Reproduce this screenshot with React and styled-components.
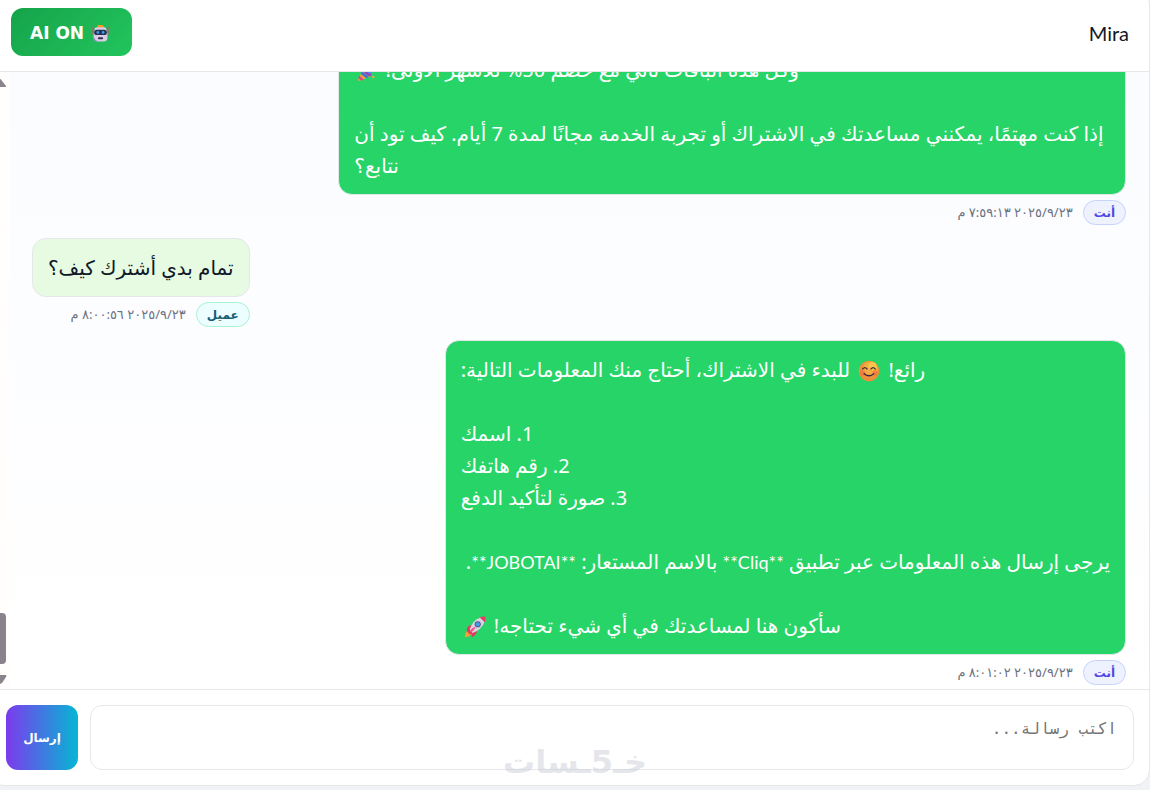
import styled, { createGlobalStyle } from 'styled-components'

const GlobalStyle = createGlobalStyle`
    *, *::before, *::after {
        box-sizing: border-box;
    }

    body {
        margin: 0;
        background-color: #f1f2f6;
        color: #111827;
        font-family: 'Noto Sans', 'DejaVu Sans', sans-serif;
    }
`

const Page = styled.div`
    position: relative;
    height: 100vh;
    padding-bottom: 4px;
    overflow: hidden;
`

const ChatCard = styled.main`
    display: flex;
    flex-direction: column;
    height: calc(100% + 12px);
    margin: -12px 0 0 -13px;
    padding: 12px 0 0 12px;
    background-color: #fff;
    border: 1px solid #e5e7eb;
    border-radius: 16px;
    overflow: hidden;
`

const Header = styled.header`
    display: flex;
    justify-content: space-between;
    align-items: center;
    padding: 7px 20px 15px 11px;
    border-bottom: 1px solid #e5e7eb;
`

const AiButton = styled.button`
    display: flex;
    align-items: center;
    gap: 8px;
    height: 48px;
    padding: 2px 23px 0 19px;
    border: none;
    border-radius: 12px;
    background-image: linear-gradient(135deg, #16a34a, #22c55e);
    color: #fff;
    font-family: 'DejaVu Sans', sans-serif;
    font-size: 17px;
    font-weight: 700;
    cursor: pointer;
`

const ContactName = styled.h1`
    margin: 0;
    padding-top: 2px;
    font-family: Lato, sans-serif;
    font-size: 20px;
    font-weight: 400;
    line-height: 28px;
`

const Body = styled.section`
    display: flex;
    flex: 1;
    min-height: 0;
    background-image: linear-gradient(#fbfcff, #fff);
`

const ScrollTrack = styled.div`
    display: flex;
    flex-direction: column;
    width: 10px;
    padding: 6px 4px 5px 0;
    background-color: #fffefc;
`

const ScrollThumb = styled.div`
    height: 51px;
    margin: auto 0 11px;
    border-radius: 0 4px 4px 0;
    background-color: #8b838b;
`

const Messages = styled.div`
    display: flex;
    flex: 1;
    flex-direction: column;
    justify-content: flex-end;
    gap: 13px;
    min-width: 0;
    padding: 0 23px 4px 22px;
    overflow: hidden;
`

const Message = styled.article`
    display: flex;
    flex-direction: column;
    flex-shrink: 0;
    gap: 5px;
    max-width: 72%;
    align-self: ${({ $own }) => ($own ? 'flex-start' : 'flex-end')};
`

const Bubble = styled.p`
    margin: 0;
    padding: 13px 15px 12px;
    border: 1px solid #e5e7eb;
    border-radius: 14px;
    background-color: ${({ $own }) => ($own ? '#27d467' : '#e7fbe3')};
    color: ${({ $own }) => ($own ? '#fff' : '#111827')};
    font-size: 20px;
    line-height: 32px;
    text-align: left;
    white-space: pre-wrap;
`

const Latin = styled.span`
    font-family: Lato, sans-serif;
    font-size: 18px;
`

const Meta = styled.footer`
    display: flex;
    align-items: center;
    gap: 10px;
    color: #6b7280;
    font-size: 13px;
    line-height: 17px;
`

const Badge = styled.span`
    padding: 3px 10px;
    border: 1px solid ${({ $own }) => ($own ? '#c7d2fe' : '#a7f3d0')};
    border-radius: 13px;
    background-color: ${({ $own }) => ($own ? '#eef2ff' : '#ecfeff')};
    color: ${({ $own }) => ($own ? '#4f46e5' : '#155e75')};
    font-size: 12px;
    font-weight: 700;
`

const Composer = styled.form`
    display: flex;
    align-items: stretch;
    gap: 12px;
    padding: 15px 15px 15px 6px;
    border-top: 1px solid #e5e7eb;
`

const MessageInput = styled.textarea`
    flex: 1;
    height: 65px;
    padding: 13px 16px;
    border: 1px solid #e5e7eb;
    border-radius: 12px;
    outline: none;
    background-color: #fff;
    font-family: 'DejaVu Sans Mono', monospace;
    font-size: 16px;
    line-height: 20px;
    resize: none;

    &::placeholder {
        color: #757575;
        opacity: 1;
    }
`

const SendButton = styled.button`
    width: 72px;
    padding: 0;
    border: none;
    border-radius: 12px;
    background-image: linear-gradient(90deg, #7c3aed, #06b6d4);
    color: #fff;
    font-family: 'DejaVu Sans', sans-serif;
    font-size: 12px;
    font-weight: 700;
    cursor: pointer;
`

const Watermark = styled.div`
    position: absolute;
    right: 0;
    bottom: 8px;
    left: 0;
    color: #d1d3db;
    font-family: 'DejaVu Sans', sans-serif;
    font-size: 32px;
    font-weight: 700;
    line-height: 40px;
    text-align: center;
    opacity: 0.55;
    pointer-events: none;
`

const Emoji = styled.svg`
    width: ${({ $size }) => $size}px;
    height: ${({ $size }) => $size}px;
    margin: 0 ${({ $gap }) => $gap || 0}px;
    vertical-align: -5px;
`

const Arrow = styled.svg`
    display: block;
    width: 7px;
    height: 9px;
`

function Robot() {
    return (
        <Emoji $size={17} viewBox="0 0 32 32" aria-hidden="true">
            <rect x="1" y="3" width="3" height="16" rx="1.5" fill="#e0457b" />
            <rect x="28" y="3" width="3" height="16" rx="1.5" fill="#e0457b" />
            <rect x="10" y="0" width="12" height="6" rx="3" fill="#f59a23" />
            <path d="M5 8q0-4 4-4h14q4 0 4 4l2 8v8q0 7-7 7H10q-7 0-7-7v-8z" fill="#d9cde6" />
            <path d="M3 22q2 6 9 9h-2q-7 0-7-7z" fill="#a877c9" />
            <rect x="4" y="9" width="24" height="10" rx="5" fill="#26314f" />
            <circle cx="11" cy="14" r="2.5" fill="#3fa2f5" />
            <circle cx="21" cy="14" r="2.5" fill="#3fa2f5" />
            <rect x="11" y="23" width="10" height="4" rx="2" fill="#35304c" />
        </Emoji>
    )
}

function Popper() {
    return (
        <Emoji $size={20} $gap={3} viewBox="0 0 32 32" aria-hidden="true">
            <path d="M10 10L2 28q0 3 3 2l18-8z" fill="#f9a23b" />
            <path d="M8 15l11 9-4 2-9-7z" fill="#3f74d6" />
            <path d="M4 22l7 6-4 2-5-4z" fill="#d9468c" />
            <ellipse cx="16" cy="16" rx="4" ry="9" fill="#8b4ac0" transform="rotate(-45 16 16)" />
            <path d="M17 15q5-4 3-11M19 18q5-5 11-3" fill="none" stroke="#3b9bf0" strokeWidth="3" />
            <circle cx="27" cy="7" r="2" fill="#f04f78" />
            <circle cx="26" cy="24" r="2" fill="#f9a23b" />
            <circle cx="10" cy="5" r="2" fill="#f04f78" />
        </Emoji>
    )
}

function Smile() {
    return (
        <Emoji $size={22} $gap={3} viewBox="0 0 32 32" aria-hidden="true">
            <circle cx="16" cy="16" r="15" fill="#ee8f3c" />
            <circle cx="18" cy="13" r="11" fill="#f5ac40" />
            <circle cx="21" cy="9" r="6" fill="#f6c64a" />
            <circle cx="7" cy="19" r="4" fill="#ee6a43" opacity="0.6" />
            <circle cx="25" cy="19" r="4" fill="#ee6a43" opacity="0.6" />
            <path
                d="M7 13q3-4 6 0M19 13q3-4 6 0M9 20q7 6 14 0"
                fill="none"
                stroke="#442643"
                strokeWidth="2"
                strokeLinecap="round"
            />
        </Emoji>
    )
}

function Rocket() {
    return (
        <Emoji $size={22} $gap={3} viewBox="0 0 32 32" aria-hidden="true">
            <path d="M4 22q-3 4-3 9 6 0 9-4z" fill="#fb9c35" />
            <path d="M12 13q-8 0-8 9l7-2zM19 20q0 8-8 11l1-9z" fill="#e9335d" />
            <path d="M8 20Q12 6 24 2l6 6Q26 20 12 25z" fill="#d8d3e5" />
            <path d="M23 2q4-2 8-1 1 4-1 8z" fill="#ef3963" />
            <path d="M7 19l6 6-4 2-4-4z" fill="#e9335d" />
            <circle cx="20" cy="12" r="4.5" fill="#5c5584" />
            <circle cx="20" cy="12" r="3" fill="#3ca3ee" />
            <path d="M8 24q2-7 9-8-3 7-9 8z" fill="#f3547c" />
        </Emoji>
    )
}

const messages = [
    {
        id: 1,
        own: true,
        time: '٢٠٢٥/٩/٢٣ ٧:٥٩:١٣ م',
        text: (
            <>
                {'وكل هذه الباقات تأتي مع خصم 50% للأشهر الأولى! '}
                <Popper />
                {'\n\nإذا كنت مهتمًا، يمكنني مساعدتك في الاشتراك أو تجربة الخدمة مجانًا لمدة 7 أيام. كيف تود أن نتابع؟'}
            </>
        ),
    },
    { id: 2, own: false, time: '٢٠٢٥/٩/٢٣ ٨:٠٠:٥٦ م', text: 'تمام بدي أشترك كيف؟' },
    {
        id: 3,
        own: true,
        time: '٢٠٢٥/٩/٢٣ ٨:٠١:٠٢ م',
        text: (
            <>
                {'رائع! '}
                <Smile />
                {' للبدء في الاشتراك، أحتاج منك المعلومات التالية:\n\n'}
                {'1. اسمك\n2. رقم هاتفك\n3. صورة لتأكيد الدفع\n\n'}
                {'يرجى إرسال هذه المعلومات عبر تطبيق '}
                <Latin>**Cliq**</Latin>
                {' بالاسم المستعار: '}
                <Latin>**JOBOTAI**</Latin>
                {'. \n\nسأكون هنا لمساعدتك في أي شيء تحتاجه! '}
                <Rocket />
            </>
        ),
    },
]

export default function App() {
    const handleSubmit = (e) => {
        e.preventDefault()
        e.target.reset()
    }
    return (
        <Page>
            <GlobalStyle />
            <ChatCard>
                <Header>
                    <AiButton type="button">
                        AI ON <Robot />
                    </AiButton>
                    <ContactName>Mira</ContactName>
                </Header>
                <Body>
                    <ScrollTrack aria-hidden="true">
                        <Arrow viewBox="0 0 7 9">
                            <path d="M0 1q1 0 2 2l4 5q1 1-1 1H0z" fill="#8b838b" />
                        </Arrow>
                        <ScrollThumb />
                        <Arrow viewBox="0 0 7 9">
                            <path d="M0 0h6q1 0 0 2L2 8 0 9z" fill="#8b838b" />
                        </Arrow>
                    </ScrollTrack>
                    <Messages dir="rtl">
                        {messages.map(({ id, own, time, text }) => (
                            <Message key={id} $own={own}>
                                <Bubble $own={own}>{text}</Bubble>
                                <Meta>
                                    <Badge $own={own}>{own ? 'أنت' : 'عميل'}</Badge>
                                    <time>{time}</time>
                                </Meta>
                            </Message>
                        ))}
                    </Messages>
                </Body>
                <Composer dir="rtl" onSubmit={handleSubmit}>
                    <MessageInput aria-label="اكتب رسالة" placeholder="اكتب رسالة..." />
                    <SendButton type="submit">إرسال</SendButton>
                </Composer>
            </ChatCard>
            <Watermark dir="rtl">خـ5ـسات</Watermark>
        </Page>
    )
}
